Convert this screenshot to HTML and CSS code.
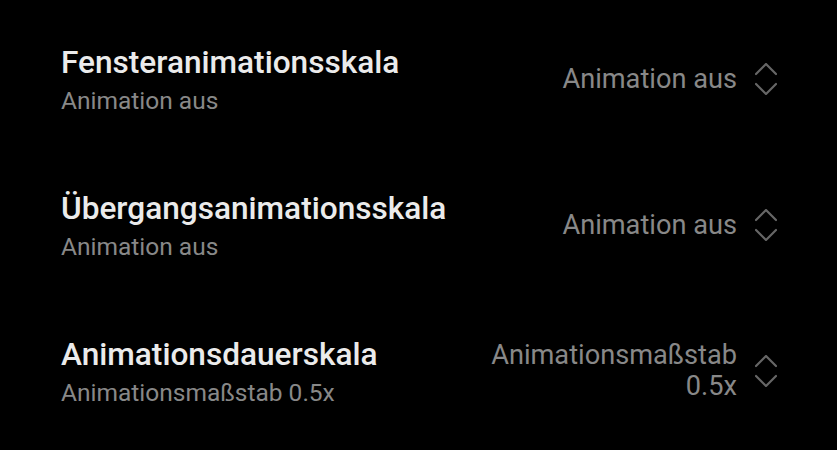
FILE: index.html
```html
<!DOCTYPE html>
<html lang="de">
<head>
<meta charset="utf-8">
<link rel="stylesheet" href="styles.css">
</head>
<body>
<div class="list">
  <div class="row">
    <div class="texts">
      <div class="title">Fensteranimationsskala</div>
      <div class="sub">Animation aus</div>
    </div>
    <div class="value">Animation aus</div>
    <svg class="chev" viewBox="0 0 22 32" width="22" height="32"><path d="M1 11 L11 1 L21 11 M1 21 L11 31 L21 21" fill="none" stroke="#666" stroke-width="2.2" stroke-linecap="round" stroke-linejoin="round"/></svg>
  </div>
  <div class="row">
    <div class="texts">
      <div class="title">Übergangsanimationsskala</div>
      <div class="sub">Animation aus</div>
    </div>
    <div class="value">Animation aus</div>
    <svg class="chev" viewBox="0 0 22 32" width="22" height="32"><path d="M1 11 L11 1 L21 11 M1 21 L11 31 L21 21" fill="none" stroke="#666" stroke-width="2.2" stroke-linecap="round" stroke-linejoin="round"/></svg>
  </div>
  <div class="row">
    <div class="texts">
      <div class="title">Animationsdauerskala</div>
      <div class="sub">Animationsmaßstab 0.5x</div>
    </div>
    <div class="value">Animationsmaßstab<br>0.5x</div>
    <svg class="chev" viewBox="0 0 22 32" width="22" height="32"><path d="M1 11 L11 1 L21 11 M1 21 L11 31 L21 21" fill="none" stroke="#666" stroke-width="2.2" stroke-linecap="round" stroke-linejoin="round"/></svg>
  </div>
</div>
</body>
</html>
```
FILE: styles.css
```css
html, body {
  margin: 0;
  background: #000;
}
body {
  font-family: Roboto, "Liberation Sans", sans-serif;
  width: 837px;
  height: 450px;
  overflow: hidden;
}
.list {
  padding-top: 6px;
}
.row {
  height: 146px;
  display: flex;
  align-items: center;
  padding: 0 60px 0 61px;
}
.texts {
  flex: 1;
  padding-top: 2px;
}
.title {
  color: #ebebeb;
  font-size: 31.6px;
  font-weight: 500;
  line-height: 38px;
}
.sub {
  color: #888;
  font-size: 24.5px;
  line-height: 32px;
  margin-top: 3px;
}
.value {
  color: #888;
  font-size: 27.2px;
  line-height: 31px;
  text-align: right;
  margin-right: 18px;
}
.chev {
  display: block;
}
```
